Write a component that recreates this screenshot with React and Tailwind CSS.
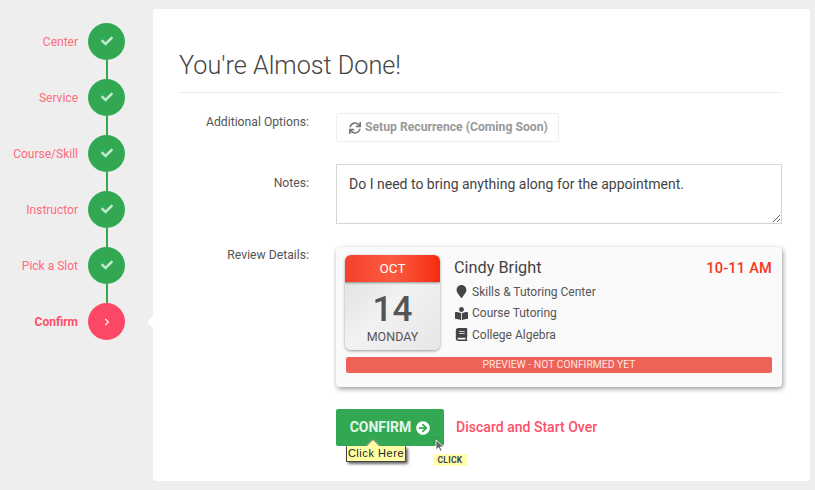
import { FaCheck, FaChevronRight, FaSync, FaMapMarker, FaBookReader, FaBook, FaArrowCircleRight } from 'react-icons/fa';

const steps = ['Center', 'Service', 'Course/Skill', 'Instructor', 'Pick a Slot'];

const StepCircle = ({ label, active, last }) => (
    <div className="flex items-start">
        <div className={`w-[78px] h-[37px] pt-[1px] flex items-center justify-end text-[12px] leading-none whitespace-nowrap ${active ? 'font-bold text-[#fd4f68]' : 'text-[#fd6b7e]'}`}>
            {label}
        </div>
        <div className="ml-[10px] flex flex-col items-center">
            <div className={`w-[37px] h-[37px] rounded-full flex items-center justify-center ${active ? 'bg-[#fd4766]' : 'bg-[#33a853]'}`}>
                {active ? <FaChevronRight className="text-white text-[8px]" /> : <FaCheck className="text-[#c5ecd0] text-[12px] -mt-[1px]" />}
            </div>
            {!last && <div className="w-[2px] h-[19px] bg-[#33a853]" />}
        </div>
    </div>
);

const FormRow = ({ label, labelClass, children, className }) => (
    <div className={`flex items-start ${className}`}>
        <div className={`w-[130px] text-right text-[12.2px] leading-none text-[#555] ${labelClass}`}>{label}</div>
        <div className="ml-[27px] flex-1">{children}</div>
    </div>
);

const DetailLine = ({ icon, text }) => (
    <div className="flex items-center h-[21.5px] text-[12px] text-[#555]">
        <span className="w-[18px] flex justify-start pl-[1px] text-[#444] text-[13px]">{icon}</span>
        {text}
    </div>
);

export default function App() {
    return (
        <div className="w-[815px] h-[490px] overflow-hidden bg-[#eeeeee] flex pt-[9px] font-['Roboto',sans-serif]">
            {/* Pasos */}
            <div className="w-[153px] shrink-0 pt-[14px] relative">
                {steps.map((s) => <StepCircle key={s} label={s} />)}
                <StepCircle label="Confirm" active last />
                <div className="absolute left-[147px] top-[307px] w-0 h-0 border-y-[6px] border-y-transparent border-r-[6px] border-r-white" />
            </div>

            {/* Panel */}
            <div className="w-[657px] h-[472px] bg-white rounded-[3px] px-[26px] relative">
                <h1 className="pt-[41px] pb-[10px] text-[25.2px] leading-[32px] font-light text-[#444] border-b border-[#eeeeee] mr-[2px]">
                    You're Almost Done!
                </h1>

                <FormRow label="Additional Options:" labelClass="pt-[3px]" className="mt-[20px]">
                    <button className="h-[29px] w-[223px] border border-[#eeeeee] rounded-[2px] flex items-center pl-[12px] gap-[4px] text-[12.2px] font-bold text-[#999] whitespace-nowrap">
                        <FaSync className="text-[#777] text-[12px]" />
                        Setup Recurrence (Coming Soon)
                    </button>
                </FormRow>

                <FormRow label="Notes:" labelClass="pt-[13px]" className="mt-[22px] mr-[2px]">
                    <textarea
                        readOnly
                        defaultValue="Do I need to bring anything along for the appointment."
                        className="block w-full h-[60px] border border-[#d5d5d5] px-[12px] pt-[9px] pb-[10px] text-[14.03px] leading-[20px] text-[#444] outline-none"
                    />
                </FormRow>

                <FormRow label="Review Details:" labelClass="pt-[2px]" className="mt-[23px] mr-[2px]">
                    <div className="h-[140px] bg-[#fafafa] rounded-[4px] shadow-[1px_2px_5px_rgba(0,0,0,0.4)] px-[9px] pt-[8px]">
                        <div className="flex items-start">
                            <div className="w-[95px] h-[95px] rounded-[6px] overflow-hidden shadow-[0_1px_3px_rgba(0,0,0,0.4)] bg-gradient-to-br from-[#dcdcdc] via-[#f2f2f2] to-[#e6e6e6] text-center shrink-0">
                                <div className="h-[27px] bg-gradient-to-r from-[#f5402c] via-[#fb5a3e] to-[#f52a0a] text-white text-[13.5px] leading-[27px] shadow-[0_1px_2px_rgba(0,0,0,0.4)]">OCT</div>
                                <div className="text-[35px] leading-[30px] mt-[13px] text-[#555] font-medium">14</div>
                                <div className="text-[12.5px] leading-[14px] mt-[5px] text-[#555]">MONDAY</div>
                            </div>
                            <div className="ml-[14px] flex-1 min-w-0">
                                <div className="flex justify-between items-center pt-[3px]">
                                    <span className="text-[16.3px] leading-[20px] text-[#444]">Cindy Bright</span>
                                    <span className="text-[14.6px] leading-[20px] font-medium text-[#f4361c] tracking-[0.2px] mr-[1px]">10-11 AM</span>
                                </div>
                                <div className="mt-[3px]">
                                    <DetailLine icon={<FaMapMarker />} text="Skills & Tutoring Center" />
                                    <DetailLine icon={<FaBookReader />} text="Course Tutoring" />
                                    <DetailLine icon={<FaBook />} text="College Algebra" />
                                </div>
                            </div>
                        </div>
                        <div className="mt-[7px] mx-[1px] h-[16px] bg-[#ef6258] rounded-[2px] text-center text-[10.35px] leading-[16px] text-[#ffe4e0]">
                            PREVIEW - NOT CONFIRMED YET
                        </div>
                    </div>
                </FormRow>

                <div className="flex items-center mt-[22px] ml-[157px]">
                    <button className="w-[108px] h-[37px] bg-[#33a853] rounded-[2px] flex items-center justify-center gap-[5px] text-[14px] font-bold text-[#e4f6ea]">
                        CONFIRM
                        <FaArrowCircleRight className="text-white text-[14px]" />
                    </button>
                    <span className="ml-[12px] text-[14.05px] font-medium text-[#fd4f68]">Discard and Start Over</span>
                </div>

                {/* Tooltip */}
                <div className="absolute left-[214px] top-[432px] w-[12px] h-[12px] rotate-45 bg-[#ffffa5] border-l border-t border-[#777]" />
                <div className="absolute left-[193px] top-[437px] h-[16px] w-[60px] bg-[#ffffa5] border-x border-b border-[#444] rounded-[1px] shadow-[2px_2px_3px_rgba(0,0,0,0.6)] text-[11px] leading-[15px] text-center text-[#222] tracking-[0.55px] font-['Liberation_Sans',sans-serif]">
                    Click Here
                </div>

                {/* Cursor */}
                <div className="absolute left-[278px] top-[426px]">
                    <svg width="16" height="18" viewBox="0 0 16 18">
                        <g stroke="#3f7f55" strokeWidth="1" opacity="0.7">
                            <path d="M5 1v3M1 5h3M2 2l2 2M9 2 7 4M2 9l2-2" />
                        </g>
                        <path d="M5 5v10l2.6-2.4 1.7 3.6 1.7-.8-1.7-3.5H13z" fill="#666" stroke="#fff" strokeWidth="0.8" />
                    </svg>
                </div>
                <div className="absolute left-[280px] top-[445px] w-[34px] h-[12px] bg-[#ffffb0] text-[8.5px] leading-[12px] font-bold text-center text-[#444] tracking-[0.3px]">CLICK</div>
            </div>
        </div>
    );
}
